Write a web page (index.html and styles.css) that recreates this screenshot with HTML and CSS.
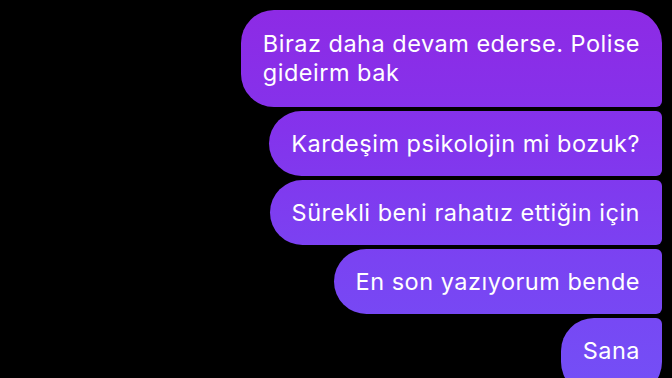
FILE: index.html
```html
<!DOCTYPE html>
<html>
	<head>
		<title>Mesajlar</title>
		<link rel="stylesheet" href="styles.css">
	</head>
	<body>
		<section class="thread">
			<div class="bubble first">Biraz daha devam ederse. Polise<br>gideirm bak</div>
			<div class="bubble">Kardeşim psikolojin mi bozuk?</div>
			<div class="bubble">Sürekli beni rahatız ettiğin için</div>
			<div class="bubble">En son yazıyorum bende</div>
			<div class="bubble last">Sana</div>
		</section>
	</body>
</html>
```
FILE: styles.css
```css
html, body {
	height: 100%;
}

body {
	margin: 0px;
	padding: 0px;
	background-color: #000;
	font-family: Inter, "Noto Sans", sans-serif;
	overflow: hidden;
}

.thread {
	display: flex;
	flex-direction: column;
	align-items: flex-end;
	gap: 4px;
	padding: 10px 10px 0px 0px;
}

.bubble {
	color: #fff;
	font-size: 23.5px;
	line-height: 29px;
	letter-spacing: 0.5px;
	padding: 18px 22px 18px 22px;
	border-radius: 33px 6px 6px 33px;
	background: linear-gradient(180deg, #8e2ae4 0px, #8433ec 130px, #7a43f2 260px, #744ef6 378px);
	background-attachment: fixed;
}

.bubble.first {
	border-radius: 33px 33px 6px 33px;
	padding-top: 19px;
	padding-bottom: 20px;
}

.bubble.last {
	border-radius: 33px 6px 33px 33px;
	padding-bottom: 30px;
}
```
